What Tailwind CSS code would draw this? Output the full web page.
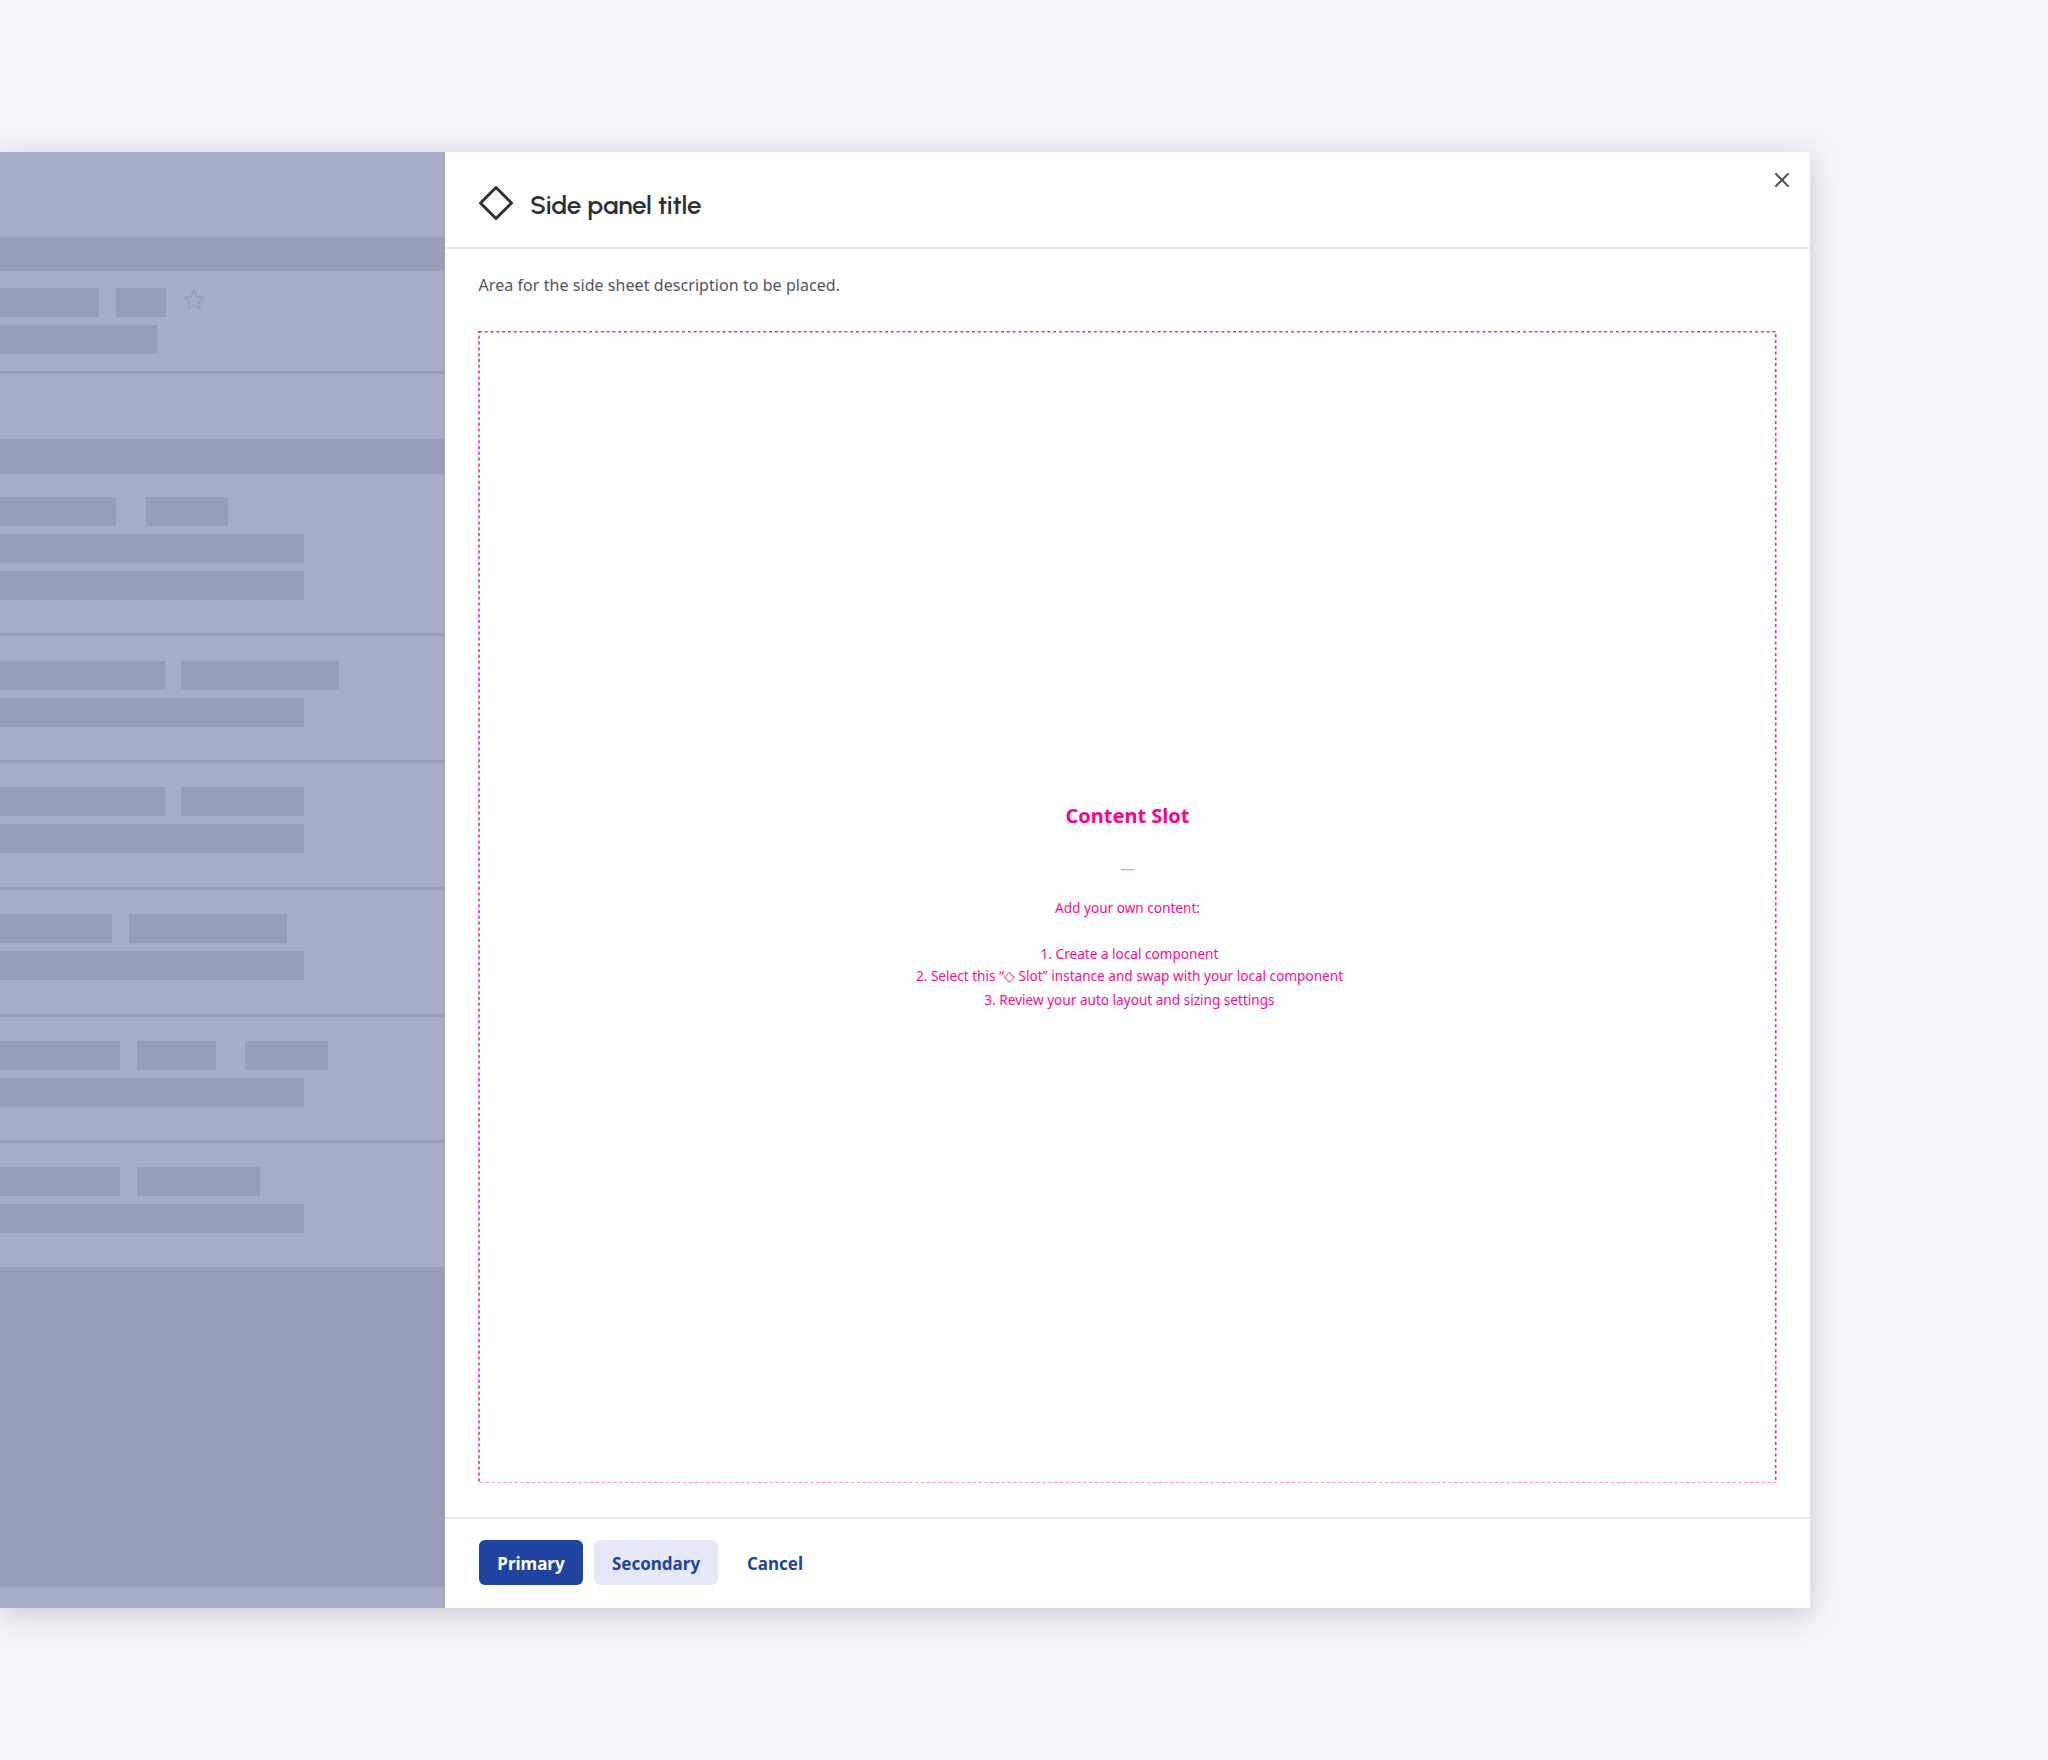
<!doctype html>
<html><head><meta charset="utf-8"><script src="https://cdn.jsdelivr.net/npm/@tailwindcss/browser@4"></script></head>
<body class="m-0 bg-[#f5f6fa]">
<div class="w-[2048px] h-[1760px] pt-[152px] font-['Noto_Sans','Open_Sans',sans-serif]">
<div class="flex w-[1810px] h-[1456px] shadow-[0_6px_28px_rgba(40,45,70,0.22)]">
  <!-- backdrop page -->
  <div class="w-[445px] h-full flex flex-col bg-[#a6aec8] border-r border-r-[#9aa2bd]">
    <div class="h-[85px] shrink-0"></div>
    <div class="h-[34px] shrink-0 bg-[#979eb8]"></div>
    <div class="h-[100px] shrink-0 pt-[17px] flex flex-col gap-2">
      <div class="flex items-start h-[29px]"><div class="w-[99px] h-full bg-[#979eb8]"></div><div class="ml-[17px] w-[50px] h-full bg-[#979eb8]"></div>
      <svg class="ml-[16px] -mt-[0.5px] w-[24px] h-[24px]" viewBox="0 0 24 24" fill="none" stroke="#9aa1bb" stroke-width="2" stroke-linejoin="round"><path d="M12 2.5l2.9 6.3 6.8.8-5 4.7 1.3 6.8-6-3.4-6 3.4 1.3-6.8-5-4.7 6.8-.8z"/></svg></div>
      <div class="w-[157px] h-[29px] bg-[#979eb8]"></div>
    </div>
    <div class="h-[3px] shrink-0 bg-[#979eb8]"></div>
    <div class="h-[65px] shrink-0"></div>
    <div class="h-[35px] shrink-0 bg-[#979eb8]"></div>
    <div class="h-[159px] shrink-0 pt-[23px] flex flex-col gap-2">
      <div class="flex h-[29px] gap-[30px]"><div class="w-[116px] bg-[#979eb8]"></div><div class="w-[82px] bg-[#979eb8]"></div></div>
      <div class="w-[304px] h-[29px] bg-[#979eb8]"></div>
      <div class="w-[304px] h-[29px] bg-[#979eb8]"></div>
    </div>
    <div class="h-[3px] shrink-0 bg-[#979eb8]"></div>
    <div class="h-[124px] shrink-0 pt-[25px] flex flex-col gap-2">
      <div class="flex h-[29px] gap-[16px]"><div class="w-[165px] bg-[#979eb8]"></div><div class="w-[158px] bg-[#979eb8]"></div></div>
      <div class="w-[304px] h-[29px] bg-[#979eb8]"></div>
    </div>
    <div class="h-[3px] shrink-0 bg-[#979eb8]"></div>
    <div class="h-[124px] shrink-0 pt-[24px] flex flex-col gap-2">
      <div class="flex h-[29px] gap-[16px]"><div class="w-[165px] bg-[#979eb8]"></div><div class="w-[123px] bg-[#979eb8]"></div></div>
      <div class="w-[304px] h-[29px] bg-[#979eb8]"></div>
    </div>
    <div class="h-[3px] shrink-0 bg-[#979eb8]"></div>
    <div class="h-[124px] shrink-0 pt-[24px] flex flex-col gap-2">
      <div class="flex h-[29px] gap-[17px]"><div class="w-[112px] bg-[#979eb8]"></div><div class="w-[158px] bg-[#979eb8]"></div></div>
      <div class="w-[304px] h-[29px] bg-[#979eb8]"></div>
    </div>
    <div class="h-[3px] shrink-0 bg-[#979eb8]"></div>
    <div class="h-[123px] shrink-0 pt-[24px] flex flex-col gap-2">
      <div class="flex h-[29px]"><div class="w-[120px] bg-[#979eb8]"></div><div class="ml-[17px] w-[79px] bg-[#979eb8]"></div><div class="ml-[29px] w-[83px] bg-[#979eb8]"></div></div>
      <div class="w-[304px] h-[29px] bg-[#979eb8]"></div>
    </div>
    <div class="h-[3px] shrink-0 bg-[#979eb8]"></div>
    <div class="h-[124px] shrink-0 pt-[24px] flex flex-col gap-2">
      <div class="flex h-[29px] gap-[17px]"><div class="w-[120px] bg-[#979eb8]"></div><div class="w-[123px] bg-[#979eb8]"></div></div>
      <div class="w-[304px] h-[29px] bg-[#979eb8]"></div>
    </div>
    <div class="h-[320px] shrink-0 bg-[#989fb9]"></div>
  </div>
  <!-- panel -->
  <div class="relative flex-1 flex flex-col bg-white">
    <button class="absolute right-[17px] top-[17px] w-[22px] h-[22px] flex items-center justify-center text-[#52535c]">
      <svg class="w-[16px] h-[16px]" viewBox="0 0 16 16" fill="none" stroke="currentColor" stroke-width="2" stroke-linecap="round"><path d="M2 2l12 12M14 2L2 14"/></svg>
    </button>
    <div class="h-[97px] shrink-0 pl-[33px] pr-[33px] pt-[33px] border-b-2 border-[#e4e6f1] flex items-start gap-[16px]">
      <svg class="w-[36px] h-[36px] shrink-0" viewBox="0 0 36 36" fill="none" stroke="#2f3036" stroke-width="3" stroke-linejoin="round"><path d="M18 2.5L33.5 18 18 33.5 2.5 18z"/></svg>
      <h1 class="text-[26px] leading-[36px] font-['Urbanist','Lato',sans-serif] font-semibold tracking-[-0.13px] text-[#2f3036] mt-[2px]">Side panel title</h1>
    </div>
    <div class="flex-1 min-h-0 flex flex-col px-[33px] pt-[24px] pb-[34px]">
      <p class="ml-[0.5px] text-[16px] leading-[24px] tracking-[0.06px] text-[#52535c]">Area for the side sheet description to be placed.</p>
      <div class="relative mt-[34px] flex-1 flex flex-col items-center text-[#ff0a8d]">
        <svg class="absolute inset-0 w-full h-full" fill="none"><rect x="1" y="0.6" width="1296.7" height="1151.6" stroke="#ff1f9c" stroke-width="1.6" stroke-dasharray="3 2.8"/></svg>
        <div class="mt-[471px] text-[20px] leading-[28px] font-bold text-[#ff008a]">Content Slot</div>
        <div class="mt-[28px] text-[14px] leading-[22px] text-[#ff8ac8]">—</div>
        <div class="mt-[17px] text-[13.6px] leading-[22px]">Add your own content:</div>
        <div class="mt-[23px] text-[13.6px] leading-[23px] text-center ml-[4px]">
          <div>1. Create a local component</div>
          <div class="-mt-px">2. Select this “◇ Slot” instance and swap with your local component</div>
          <div class="mt-px">3. Review your auto layout and sizing settings</div>
        </div>
      </div>
    </div>
    <div class="h-[91px] shrink-0 border-t-2 border-[#e4e6f1] pl-[34px] pr-[33px] pt-[21px] flex items-start gap-[11px]">
      <button class="h-[45px] w-[104px] pt-[2px] rounded-[6px] bg-[#2044a2] text-white text-[17px] font-bold">Primary</button>
      <button class="h-[45px] w-[124px] pt-[2px] rounded-[6px] bg-[#e6e8f7] text-[#2044a2] text-[17px] font-bold">Secondary</button>
      <button class="h-[45px] w-[92px] pt-[2px] text-[#2044a2] text-[17px] font-bold">Cancel</button>
    </div>
  </div>
</div>
</div>
</body></html>
